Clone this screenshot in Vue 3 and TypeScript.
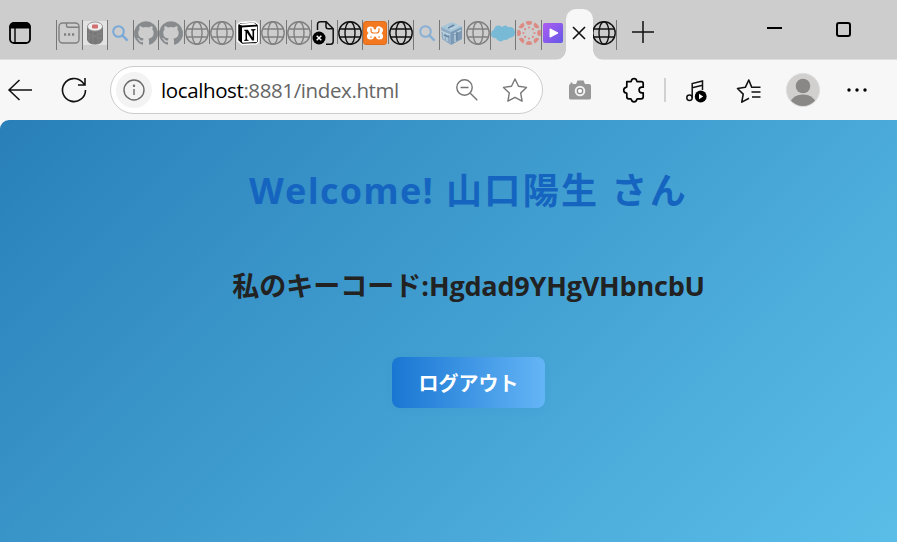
<script setup lang="ts">
type IconName =
  | 'window' | 'sushi' | 'search' | 'github' | 'globe' | 'notion'
  | 'broken' | 'xampp' | 'cube' | 'cloud' | 'canvas' | 'play'

interface Tab {
  icon: IconName
  dim?: boolean
}

const tabs: Tab[] = [
  { icon: 'window' },
  { icon: 'sushi' },
  { icon: 'search' },
  { icon: 'github' },
  { icon: 'github' },
  { icon: 'globe', dim: true },
  { icon: 'globe', dim: true },
  { icon: 'notion' },
  { icon: 'globe', dim: true },
  { icon: 'globe', dim: true },
  { icon: 'broken' },
  { icon: 'globe' },
  { icon: 'xampp' },
  { icon: 'globe' },
  { icon: 'search', dim: true },
  { icon: 'cube' },
  { icon: 'globe', dim: true },
  { icon: 'cloud' },
  { icon: 'canvas' },
  { icon: 'play' },
]

const spokes = [0, 45, 90, 135, 180, 225, 270, 315]
const userName: string = '山口陽生'
const keyCode: string = 'Hgdad9YHgVHbncbU'
</script>

<template>
  <div class="browser">
    <header class="tabbar">
      <svg class="workspace" viewBox="0 0 22 22">
        <rect x="1" y="1" width="20" height="20" rx="4" fill="none" stroke="#000" stroke-width="1.8" />
        <path d="M1 6V4.500Q1 1 4.500 1h13Q21 1 21 4.500V6z" fill="#000" stroke="#000" />
        <path d="M6 6v15" stroke="#000" stroke-width="1.4" />
      </svg>

      <div class="tabs">
        <div v-for="(tab, i) in tabs" :key="i" class="tab" :class="[tab.icon, { dim: tab.dim }]">
          <svg v-if="tab.icon === 'window'" viewBox="0 0 24 24" fill="none" stroke="#808080" stroke-width="1.4">
            <rect x="2" y="2" width="20" height="20" rx="3.500" />
            <path d="M9.500 2v2.500q0 1.800 1.800 1.800H22" />
            <path d="M7 13.500h2.200M11 13.500h2.200M15 13.500h2.200" stroke-width="2.400" />
          </svg>
          <svg v-else-if="tab.icon === 'sushi'" viewBox="0 0 24 24">
            <path d="M0 0h24v24H0z" fill="#e2e2e2" />
            <path d="M4 5v14q2 4.500 8 4.500t8-4.500V5z" fill="#777" />
            <path d="M6 8v13M10 9v14M15 9v14M18 7v14M5 13l14 5M5 18l13-6" stroke="#848484" />
            <ellipse cx="12" cy="5.500" rx="7.500" ry="4.500" fill="#eee" stroke="#999" />
            <rect x="9" y="3.500" width="6" height="4" rx="1" fill="#cf6f6f" />
          </svg>
          <svg v-else-if="tab.icon === 'search'" viewBox="0 0 24 24" fill="none" stroke="#79a9d7">
            <circle cx="10.500" cy="10.500" r="5.300" stroke-width="2" />
            <path d="m14.300 14.300 5.300 5.300" stroke-width="2.400" />
          </svg>
          <svg v-else-if="tab.icon === 'github'" viewBox="0 0 24 24">
            <path fill="#888b8d" d="M12 .3a12 12 0 0 0-3.800 23.400c.6.1.8-.3.8-.6v-2c-3.300.7-4-1.600-4-1.600-.6-1.400-1.400-1.800-1.400-1.800-1-.7.1-.7.1-.7 1.200 0 1.900 1.200 1.900 1.200 1 1.800 2.800 1.300 3.500 1 0-.8.4-1.300.7-1.600-2.700-.3-5.500-1.300-5.500-6 0-1.200.5-2.300 1.300-3.100-.2-.4-.6-1.600 0-3.200 0 0 1-.3 3.400 1.200a11.500 11.500 0 0 1 6 0c2.300-1.500 3.300-1.200 3.300-1.200.6 1.600.2 2.800 0 3.200.9.800 1.300 1.900 1.300 3.200 0 4.600-2.800 5.600-5.500 5.900.5.400.9 1 .9 2.200v3.300c0 .3.1.7.8.6A12 12 0 0 0 12 .3" />
          </svg>
          <svg v-else-if="tab.icon === 'globe'" class="globe" viewBox="0 0 24 24">
            <circle cx="12" cy="12" r="11.200" /><ellipse cx="12" cy="12" rx="5" ry="11.200" />
            <path d="M1.700 8h20.600M1.700 16h20.600" />
          </svg>
          <svg v-else-if="tab.icon === 'notion'" viewBox="0 0 24 24">
            <path d="m1.500 3.500 3-2L18.500.7l4 3V21l-2 1.800-14.500.8-4.500-4z" fill="#000" stroke="#fff" stroke-width="1.500" />
            <path d="m3 3.700 2-1.200 13-.8 2.500 2-14 .9zM6 6.500l15-1v15.500l-14 .8q-1 0-1-1z" fill="#fff" />
            <path d="M8.300 8.800h3.600l4.600 7.700V9.700l-1.500-.4v-1l4.500-.3v1l-1.400.5v10h-2L11 11.800v6.600l1.600.5v.9l-4.300.2v-.9l1.200-.6v-8.400l-1.200-.4z" fill="#000" />
          </svg>
          <svg v-else-if="tab.icon === 'broken'" viewBox="0 0 24 24">
            <path d="M5.500 9V3.500q0-2.700 2.700-2.700h6l7 7V20.500q0 2.800-2.800 2.800H14M14 1v4.500q0 2.300 2.300 2.300H21" fill="none" stroke="#111" stroke-width="1.500" />
            <circle cx="7" cy="17" r="6.500" fill="#000" />
            <path d="m4.700 14.700 4.600 4.600m0-4.600-4.600 4.600" stroke="#fff" stroke-width="1.500" />
          </svg>
          <svg v-else-if="tab.icon === 'xampp'" viewBox="0 0 24 24">
            <rect x=".5" y=".5" width="23" height="23" rx="2.500" fill="#f47820" stroke="#dd6c1b" />
            <path d="M7.500 6.500Q5 6.500 5 9q0 1.500 1.800 3Q5 13.500 5 15q0 2.500 2.500 2.500Q10 17.500 10 15q2-1.300 4 0 0 2.500 2.500 2.500T19 15q0-1.500-1.800-3Q19 10.500 19 9t-2.500-2.500T14 9q-2 1.300-4 0 0-2.500-2.500-2.500z" fill="#fff" stroke="#fff" stroke-width="2.200" stroke-linejoin="round" />
            <path d="M8 7.300v2.200q0 2.500 2.500 2.500h3Q16 12 16 9.500V7.300M8 16.700v-1.500M16 16.700v-1.500" fill="none" stroke="#f47820" stroke-width="1.200" />
          </svg>
          <svg v-else-if="tab.icon === 'cube'" viewBox="0 0 24 24">
            <path d="m1 6 11-5 11 5-11 6z" fill="#a7c5d8" />
            <path d="m1 6 10 5v13L2 18z" fill="#8eabc3" />
            <path d="m11 11 11-5v12l-11 6z" fill="#7c9ab5" />
            <path d="m7 5 5 3 7-4M1 10l9 4M4 11v7M7 13v7M14 13l7-4M15 14v7" stroke="#bfd5e1" stroke-width="1.300" fill="none" />
            <path d="m8 7 6-3M17 11v8M4 14l5 2" stroke="#6686a3" stroke-width="1.500" />
          </svg>
          <svg v-else-if="tab.icon === 'cloud'" viewBox="0 0 24 24">
            <path d="M3 8.500Q4 4 8 4.500q2 0 3 1.700Q14 3 17 6q7-.8 7 5.500 0 5-6 5.500-2 3-5 1.500-2 3.500-6 1-1.500-.8-2-2.300-5 0-5-4.400Q0 10 3 8.500" fill="#78b9d6" />
          </svg>
          <svg v-else-if="tab.icon === 'canvas'" viewBox="0 0 24 24" fill="#dc8a83">
            <g v-for="angle in spokes" :key="angle" :transform="`rotate(${angle} 12 12)`">
              <path d="M8.800.5Q12-.4 15.200.5 15 4 12 4T8.800.5" />
              <circle cx="12" cy="6.500" r="1.100" />
            </g>
          </svg>
          <svg v-else viewBox="0 0 24 24">
            <defs>
              <linearGradient id="violet" x2="1" y2="1"><stop stop-color="#ad5cf1" /><stop offset="1" stop-color="#6558e8" /></linearGradient>
            </defs>
            <rect x="1" y="2" width="20" height="20" rx="2" fill="url(#violet)" />
            <path d="m8 7.800 8 4.200-8 4.200z" fill="#fff" stroke="#fff" stroke-linejoin="round" />
          </svg>
        </div>
        <div class="active-tab">
          <svg viewBox="0 0 14 14"><path d="m1 1 12 12M13 1 1 13" stroke="#111" stroke-width="1.600" /></svg>
        </div>
        <div class="last-tab">
          <svg class="globe" viewBox="0 0 24 24">
            <circle cx="12" cy="12" r="11.200" /><ellipse cx="12" cy="12" rx="5" ry="11.200" />
            <path d="M1.700 8h20.600M1.700 16h20.600" />
          </svg>
        </div>
      </div>
      <svg class="plus" viewBox="0 0 22 22"><path d="M11 0v22M0 11h22" stroke="#111" stroke-width="1.500" /></svg>
      <div class="window-controls">
        <span class="minimize"></span>
        <span class="maximize"></span>
      </div>
    </header>

    <nav class="toolbar">
      <svg class="back" viewBox="0 0 26 24" fill="none" stroke="#111" stroke-width="1.500"><path d="M12.500 2 2 12l10.500 10M2 12h23" /></svg>
      <svg class="reload" viewBox="0 0 26 26" fill="none" stroke="#111" stroke-width="1.600"><path d="M24.500 13a11.500 11.500 0 1 1-3-7.700L24 8M24 1v7h-7" /></svg>
      <div class="address">
        <span class="info">
          <svg viewBox="0 0 22 22" fill="none" stroke="#6a6a6a" stroke-width="1.400"><circle cx="11" cy="11" r="10" /><path d="M11 10v6" /><circle cx="11" cy="6.700" r=".5" fill="#6a6a6a" /></svg>
        </span>
        <span class="url">localhost<span>:8881/index.html</span></span>
        <svg class="zoom-out" viewBox="0 0 22 22" fill="none" stroke="#757575" stroke-width="1.400"><circle cx="8.500" cy="8.500" r="7.700" /><path d="m14 14 7.300 7.300M4.500 8.500h8" /></svg>
        <svg class="star" viewBox="0 0 26 26" fill="none" stroke="#777" stroke-width="1.400" stroke-linejoin="round"><path d="m13 2 3.500 7.300 8 1.100-5.800 5.700 1.400 8L13 20.300l-7.100 3.800 1.400-8-5.800-5.700 8-1.100z" /></svg>
      </div>
      <svg class="camera" viewBox="0 0 22 20"><path d="M1.500 4V2.500h2V4H7l1.500-3.500h6L16 4h4q2 0 2 2v12q0 1.500-2 1.500H2Q0 19.500 0 18V6q0-2 1.500-2" fill="#989898" /><circle cx="11" cy="11" r="4.300" fill="#8c8c8c" stroke="#f1f1f1" stroke-width="2" /><circle cx="11" cy="11" r="2.100" fill="#fff" /></svg>
      <svg class="puzzle" viewBox="0 0 24 26" fill="none" stroke="#000" stroke-width="1.700" stroke-linejoin="round"><path d="M4.800 4.700h3.700q.8 0 .9-.8a2.700 2.700 0 0 1 5.300 0q.1.800.9.800h3.600q2 0 2 2v3.500h-1.300a2.800 2.800 0 0 0 0 5.600h1.300v4q0 2-2 2h-3.600q-.8 0-.9.800a2.700 2.700 0 0 1-5.300 0q-.1-.8-.9-.8H6.800q-2 0-2-2V16.600q0-.6-.8-.7a2.800 2.800 0 0 1 0-5.500q.8-.1.8-.8z" /></svg>
      <span class="divider"></span>
      <svg class="music" viewBox="0 0 22 24" fill="none" stroke="#111" stroke-width="1.500"><circle cx="3.500" cy="18.700" r="2.700" /><path d="M6.200 18.700V4.500L16.500 2v9M6.200 8.700l10.300-2.500" /><circle cx="14.700" cy="17.500" r="5.900" fill="#000" stroke="none" /><path d="m13 14.700 4.200 2.800-4.200 2.800z" fill="#fff" stroke="none" /></svg>
      <svg class="favorites" viewBox="0 0 26 26" fill="none" stroke="#111" stroke-width="1.600" stroke-linejoin="round"><path d="M16.500 9.300h-.8L12.800 2 9.300 9.300 1.500 10.500l5.700 5.600-1.400 8 7.200-3.800M16 9.300h8.500M15.500 14h9M16 19h8.500" /></svg>
      <svg class="avatar" viewBox="0 0 34 34">
        <defs><clipPath id="portrait"><circle cx="17" cy="17" r="16" /></clipPath></defs>
        <circle cx="17" cy="17" r="16.600" fill="#d2d0ce" stroke="#dedede" />
        <g clip-path="url(#portrait)" fill="#8a8886"><circle cx="17" cy="13" r="7.300" /><ellipse cx="17" cy="32.500" rx="13.500" ry="11" /></g>
      </svg>
      <svg class="more" viewBox="0 0 20 4"><circle cx="2" cy="2" r="1.700" /><circle cx="10" cy="2" r="1.700" /><circle cx="18" cy="2" r="1.700" /></svg>
    </nav>

    <div class="viewport">
      <main class="page">
        <h1><span>Welcome!</span> {{ userName }} さん</h1>
        <h2>私のキーコード:<span>{{ keyCode }}</span></h2>
        <button type="button">ログアウト</button>
      </main>
    </div>
  </div>
</template>

<style>
body { margin: 0; overflow: hidden; }
</style>

<style scoped>
* { box-sizing: border-box; }
svg { display: block; flex: none; overflow: visible; }
.browser { width: 897px; height: 542px; overflow: hidden; background: #f7f7f7; font-family: "Open Sans", "Noto Sans CJK JP", sans-serif; }
.tabbar { display: flex; height: 60px; background: #cdcdcd; border-bottom: 1px solid #dfdfdf; }
.workspace { width: 22px; height: 22px; margin: 22px 0 0 9px; }
.tabs { display: flex; flex: none; margin-left: 25px; height: 60px; }
.tab { flex: 0 0 25.530px; height: 30px; margin-top: 20px; border-left: 1px solid #777; padding-top: 1px; }
.tab svg { width: 24px; height: 24px; margin-left: .3px; }
.tab.search svg { margin-left: .4px; }
.tab.search.dim svg { opacity: .8; }
.globe { width: 24px; height: 24px; fill: none; stroke: #111; stroke-width: 1.4; }
.tab.dim .globe { stroke: #808080; }
.active-tab { position: relative; flex: none; width: 27px; height: 51px; margin: 9px 0 0 -.700px; border-radius: 10px 10px 0 0; background: #f7f7f7; display: flex; justify-content: center; padding-top: 17px; z-index: 1; }
.active-tab::before, .active-tab::after { content: ""; position: absolute; bottom: 0; width: 10px; height: 10px; }
.active-tab::before { left: -10px; background: radial-gradient(circle at 0 0, transparent 9.500px, #f7f7f7 10px); }
.active-tab::after { right: -10px; background: radial-gradient(circle at 100% 0, transparent 9.500px, #f7f7f7 10px); }
.active-tab svg { width: 14px; height: 14px; margin-left: 0; }
.last-tab { flex: none; width: 24.400px; height: 30px; border-right: 1px solid #777; margin-top: 20px; padding-top: 1px; }
.last-tab svg { margin-left: -.500px; }
.plus { width: 22px; height: 22px; margin: 21px 0 0 14.500px; }
.window-controls { display: flex; margin: 22px 46px 0 auto; gap: 54px; }
.minimize { width: 15px; height: 2px; margin-top: 5px; background: #000; }
.maximize { width: 15px; height: 15px; border: 2px solid #000; border-radius: 3px; }
.toolbar { display: flex; align-items: center; height: 60px; background: #f7f7f7; }
.back { width: 26px; height: 24px; margin-left: 7px; }
.reload { width: 26px; height: 26px; margin-left: 28px; }
.address { display: flex; align-items: center; width: 433px; height: 48px; margin-left: 23px; border: 1px solid #ccc; border-radius: 24px; background: #fff; padding-left: 5px; }
.info { display: flex; align-items: center; justify-content: center; width: 36px; height: 36px; border-radius: 50%; background: #f3f3f3; }
.info svg { width: 22px; height: 22px; }
.url { width: 240px; margin-left: 9px; font-size: 20.500px; line-height: 28px; letter-spacing: -.39px; white-space: nowrap; color: #000; }
.url span { color: #666; }
.zoom-out { width: 22px; height: 22px; margin-left: 55px; }
.star { width: 26px; height: 26px; margin-left: 24px; }
.camera { width: 22px; height: 20px; margin-left: 26px; }
.puzzle { width: 24px; height: 26px; margin-left: 31px; }
.divider { width: 2px; height: 24px; margin-left: 18px; background: #d1d1d1; }
.music { width: 22px; height: 24px; margin: 1px 0 0 20px; }
.favorites { width: 26px; height: 26px; margin: 1px 0 0 28px; }
.avatar { width: 34px; height: 34px; margin-left: 24px; }
.more { width: 20px; height: 4px; margin-left: 27px; }
.viewport { height: 422px; border-radius: 9px 0 0; overflow: hidden; }
.page { display: flex; flex-direction: column; align-items: center; width: 937px; height: 460px; background: linear-gradient(135deg, #2980b9, #5dc1eb); }
h1 { margin: 44px 0 0; color: #1565c0; font-size: 36px; line-height: 54px; letter-spacing: 2.400px; white-space: nowrap; }
h1 span { letter-spacing: 1.300px; }
h2 { margin: 48px 0 0; color: #222; font-size: 27px; line-height: 40px; white-space: nowrap; }
h2 span { letter-spacing: -.200px; }
button { width: 153px; height: 51px; margin-top: 51px; padding: 0; border: 0; border-radius: 8px; background: linear-gradient(90deg, #1976d2, #64b5f6); color: #fff; font: bold 20px/51px "Noto Sans CJK JP", sans-serif; box-shadow: 0 2px 8px rgb(25 118 210 / 8%); }
</style>
